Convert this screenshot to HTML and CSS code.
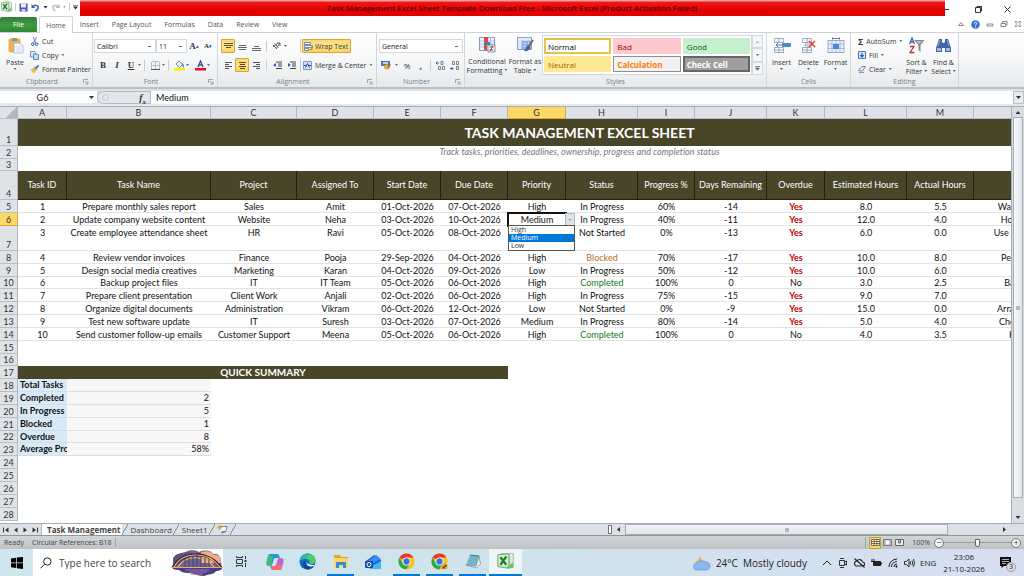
FILE: index.html
```html
<!DOCTYPE html>
<html lang="en">
<head>
<meta charset="utf-8">
<title>Task Management Excel Sheet</title>
<link rel="stylesheet" href="styles.css">
</head>
<body>
<svg class="defs" aria-hidden="true">
  <symbol id="excel" viewBox="0 0 20 20"><rect x="5" y="1" width="14" height="15" fill="#f7fbf5" stroke="#7fae7b"/><path d="M12 5h6M12 8h6M12 11h6M15 2v13" stroke="#a9cfa4"/><path d="M1 2l13-1v17L1 16z" fill="#d4edcf" stroke="#5da353"/><path d="M4 5l7 9M11 4l-7 10" stroke="#1e7b2e" stroke-width="2.6"/><path d="M10 18l9-7v7z" fill="#75c063"/></symbol>
  <symbol id="chrome" viewBox="0 0 20 20"><circle cx="10" cy="10" r="9.5" fill="#fbc116"/><path d="M10 10L1.8 5.2A9.5 9.5 0 0 1 18.2 5.2H10z" fill="#e33b2e"/><path d="M1.8 5.2A9.5 9.5 0 0 0 9.6 19.5L14 12 10 10 5.9 12.3z" fill="#2da94f"/><circle cx="10" cy="10" r="4.8" fill="#fff"/><circle cx="10" cy="10" r="3.7" fill="#3474e0"/></symbol>
  <symbol id="launch" viewBox="0 0 6 6"><path d="M.5 4V.5H5M2 2l3 3M5 2.5V5H2.500" fill="none" stroke="#8b929a" stroke-width=".8"/></symbol>
</svg>

<header class="titlebar">
  <div class="quick">
    <svg width="11" height="12"><use href="#excel"/></svg>
    <i class="vsep"></i>
    <button aria-label="Save"><svg width="9" height="9" viewBox="0 0 9 9"><path d="M.5.5h8v8h-8z" fill="#4a53b5"/><path d="M2 .5h5v4H2z" fill="#eef2fb"/><path d="M2.500 6h4v2.500h-4z" fill="#cfd5ee"/></svg></button>
    <button aria-label="Undo"><svg width="9" height="9" viewBox="0 0 9 9"><path d="M2 3.500C5 1 8 3 7 5.500 6.500 7 5.500 7.500 4.500 8" fill="none" stroke="#3a66c4" stroke-width="1.600"/><path d="M.5 1v4h4z" fill="#3a66c4"/></svg></button>
    <i class="arrow dark"></i>
    <button aria-label="Redo"><svg width="9" height="9" viewBox="0 0 9 9"><path d="M7 3.500C4 1 1 3 2 5.500 2.500 7 3.500 7.500 4.500 8" fill="none" stroke="#b4b8bd" stroke-width="1.200"/><path d="M8.500 1v4h-4z" fill="#b4b8bd"/></svg></button>
    <i class="arrow pale"></i>
    <i class="vsep"></i>
    <i class="arrow dark bar"></i>
  </div>
  <h1 class="caption">Task Management Excel Sheet Template Download Free - Microsoft Excel (Product Activation Failed)</h1>
  <div class="winctl">
    <button aria-label="Minimize"><svg width="9" height="9" viewBox="0 0 9 9"><path d="M0 4.500h4" stroke="#333"/></svg></button>
    <button aria-label="Restore"><svg width="9" height="9" viewBox="0 0 9 9"><path d="M1.500 2.500h5v5h-5zM3 2.500v-1h4.500V6h-1" fill="none" stroke="#333"/></svg></button>
    <button aria-label="Close"><svg width="9" height="9" viewBox="0 0 9 9"><path d="M1.500 1.500l6 6M7.500 1.500l-6 6" stroke="#333"/></svg></button>
  </div>
</header>

<nav class="tabs">
  <button class="file">File</button>
  <button class="tab on">Home</button>
  <button class="tab">Insert</button>
  <button class="tab">Page Layout</button>
  <button class="tab">Formulas</button>
  <button class="tab">Data</button>
  <button class="tab">Review</button>
  <button class="tab">View</button>
  <div class="docctl">
    <button aria-label="Minimize ribbon"><svg width="8" height="8" viewBox="0 0 8 8"><path d="M1.500 5.500h5L4 2.500z" fill="none" stroke="#777" stroke-width=".8"/></svg></button>
    <button aria-label="Help"><svg width="9" height="9" viewBox="0 0 9 9"><circle cx="4.500" cy="4.500" r="4.300" fill="#3474cf"/><path d="M3.200 3.600c0-2 2.800-1.800 2.600 0-.1.900-1.300.9-1.300 2M4.500 6.600v1" fill="none" stroke="#fff"/></svg></button>
    <button aria-label="Minimize window"><svg width="8" height="8" viewBox="0 0 8 8"><path d="M1 4h6v2H1z" fill="none" stroke="#777" stroke-width=".8"/></svg></button>
    <button aria-label="Restore window"><svg width="8" height="8" viewBox="0 0 8 8"><path d="M1 3.500h4.500v3H1zM2.500 3V1.500H7V5H6" fill="none" stroke="#777" stroke-width=".9"/></svg></button>
    <button aria-label="Close window"><svg width="8" height="8" viewBox="0 0 8 8"><path d="M1 1.500h2l1 1.500 1-1.500h2L5.300 4 7 6.500H5L4 5 3 6.500H1L2.700 4z" fill="none" stroke="#777" stroke-width=".7"/></svg></button>
  </div>
</nav>

<section class="ribbon">
  <div class="group g-clip">
    <div class="body">
      <button class="big paste"><svg width="17" height="17" viewBox="0 0 17 17"><rect x="2" y="2" width="11" height="13" rx="1" fill="#efb252" stroke="#d39333" stroke-width=".6"/><path d="M5 1h5v3H5z" fill="#8d8f96"/><path d="M7 6h6l3 3v7H7z" fill="#f3f7fd" stroke="#90a6c8" stroke-width=".7"/><path d="M9 10h5M9 12h5M9 14h5" stroke="#bccbe2" stroke-width=".6"/></svg><span>Paste</span><i class="arrow"></i></button>
      <div class="stack">
        <button class="line"><svg width="9" height="9" viewBox="0 0 9 9"><path d="M3 0l3 6M6.500 0L3.500 6" stroke="#557bbf" stroke-width=".9"/><circle cx="2.800" cy="7.200" r="1.300" fill="none" stroke="#3158a8"/><circle cx="6.600" cy="7.200" r="1.300" fill="none" stroke="#3158a8"/></svg>Cut</button>
        <button class="line"><svg width="9" height="9" viewBox="0 0 9 9"><path d="M.5.5h4l1 1v4.500h-5z" fill="#dfeafa" stroke="#5478b9" stroke-width=".8"/><path d="M3.500 3h4l1 1v4.500h-5z" fill="#c7dbf7" stroke="#4169b0" stroke-width=".8"/></svg>Copy<i class="arrow"></i></button>
        <button class="line"><svg width="9" height="9" viewBox="0 0 9 9"><path d="M0 5l4-2.500 2.500 2.500L4 8.500z" fill="#e9bd4e"/><path d="M4 2.500L5 1.500l2.500 2.500-1 1z" fill="#6a7ba5"/><path d="M6.300 2.800L8.500.5" stroke="#3d4c80" stroke-width="1.500"/></svg>Format Painter</button>
      </div>
    </div>
    <div class="foot"><span>Clipboard</span><svg width="6" height="6"><use href="#launch"/></svg></div>
  </div>

  <div class="group g-font">
    <div class="rows">
      <div class="row">
        <select class="combo name" aria-label="Font"><option>Calibri</option></select>
        <select class="combo size" aria-label="Font size"><option>11</option></select>
        <button class="ic serif grow" aria-label="Grow font">A<sup>▴</sup></button>
        <button class="ic serif shrink" aria-label="Shrink font">A<sup>▾</sup></button>
      </div>
      <div class="row">
        <button class="ic serif b">B</button>
        <button class="ic serif i">I</button>
        <button class="ic serif u">U</button>
        <i class="arrow"></i><i class="vsep"></i>
        <button class="ic" aria-label="Borders"><svg width="9" height="9" viewBox="0 0 9 9"><path d="M1 .5h7M1 4.500h7M.5 1v7M4.500 1v7M8.500 1v7" stroke="#aab0b8" stroke-width=".8"/><path d="M0 8.500h9" stroke="#555"/></svg></button>
        <i class="arrow"></i><i class="vsep"></i>
        <button class="ic" aria-label="Fill colour"><svg width="11" height="11" viewBox="0 0 11 11"><path d="M2 4l3-3 3.500 3.500-3 3z" fill="#e7eefa" stroke="#5f7091" stroke-width=".8"/><path d="M8 3c2 1 2 3 1.500 5L8 5z" fill="#366ac3"/><path d="M0 8h11v2.500H0z" fill="#ffee00"/></svg></button>
        <i class="arrow"></i>
        <button class="ic" aria-label="Font colour"><svg width="11" height="11" viewBox="0 0 11 11"><path d="M3 7l2.500-6L8 7M3.800 5h3.400" fill="none" stroke="#35508f" stroke-width="1.300"/><path d="M0 8h11v2.500H0z" fill="#e8111b"/></svg></button>
        <i class="arrow"></i>
      </div>
    </div>
    <div class="foot"><span>Font</span><svg width="6" height="6"><use href="#launch"/></svg></div>
  </div>

  <div class="group g-align">
    <div class="rows">
      <div class="row">
        <button class="ic on" aria-label="Top align"><svg width="9" height="9" viewBox="0 0 9 9"><path d="M0 1.500h9M0 3.500h9M2 5.500h5" stroke="#5b5430"/></svg></button>
        <button class="ic" aria-label="Middle align"><svg width="9" height="9" viewBox="0 0 9 9"><path d="M1 3.500h7M0 5.500h9M1 7.500h7" stroke="#666"/></svg></button>
        <button class="ic" aria-label="Bottom align"><svg width="9" height="9" viewBox="0 0 9 9"><path d="M2 4.500h5M0 6.500h9M0 8.500h9" stroke="#666"/></svg></button>
        <i class="vsep"></i>
        <button class="ic" aria-label="Orientation"><svg width="10" height="10" viewBox="0 0 10 10"><path d="M1 4l4 4M2.500 2.500l4 4M1 6l5-4M4 8l4-6M8 2v3M8 2H5" stroke="#555" fill="none" stroke-width=".9"/></svg></button>
        <i class="arrow"></i><i class="vsep right"></i>
        <button class="wide on wrap"><svg width="9" height="9" viewBox="0 0 9 9"><path d="M.5.5h6v2h-6zM.5 3.500h8v2h-8zM.5 6.500h4v2h-4z" fill="#f3f6fb" stroke="#5b74a8" stroke-width=".8"/><path d="M8 4v3.500H5.500" fill="none" stroke="#c07a18"/></svg>Wrap Text</button>
      </div>
      <div class="row">
        <button class="ic" aria-label="Align left"><svg width="9" height="9" viewBox="0 0 9 9"><path d="M1 1.500h7M1 3.500h4M1 5.500h7M1 7.500h4" stroke="#555"/></svg></button>
        <button class="ic on" aria-label="Center"><svg width="9" height="9" viewBox="0 0 9 9"><path d="M1 1.500h7M2 3.500h5M1 5.500h7M2 7.500h5" stroke="#5b4a10"/></svg></button>
        <button class="ic" aria-label="Align right"><svg width="9" height="9" viewBox="0 0 9 9"><path d="M1 1.500h7M4 3.500h4M1 5.500h7M4 7.500h4" stroke="#555"/></svg></button>
        <i class="vsep"></i>
        <button class="ic" aria-label="Decrease indent"><svg width="9" height="9" viewBox="0 0 9 9"><path d="M3 1h6M5 3h4M5 5h4M3 7.500h6" stroke="#444"/><path d="M0 4l3-2v4z" fill="#2c65c4"/></svg></button>
        <button class="ic" aria-label="Increase indent"><svg width="9" height="9" viewBox="0 0 9 9"><path d="M3 1h6M5 3h4M5 5h4M3 7.500h6" stroke="#444"/><path d="M4 4L1 2v4z" fill="#2c65c4"/></svg></button>
        <i class="vsep right"></i>
        <button class="wide"><svg width="9" height="9" viewBox="0 0 9 9"><path d="M.5.5h8v8h-8z" fill="#cfe0f7" stroke="#6884b8" stroke-width=".8"/><path d="M2.500 6.500L4.500 2.500l2 4M1 4.500h2M6 4.500h2" fill="none" stroke="#27427c" stroke-width=".9"/></svg>Merge &amp; Center<i class="arrow"></i></button>
      </div>
    </div>
    <div class="foot"><span>Alignment</span><svg width="6" height="6"><use href="#launch"/></svg></div>
  </div>

  <div class="group g-num">
    <div class="rows">
      <div class="row"><select class="combo fmt" aria-label="Number format"><option>General</option></select></div>
      <div class="row">
        <button class="ic" aria-label="Currency"><svg width="10" height="10" viewBox="0 0 10 10"><path d="M0 1h9v5H0z" fill="#5278bb"/><path d="M2 2h5v2H2z" fill="#bcd0ee"/><ellipse cx="6" cy="7" rx="3" ry="2.500" fill="#e4b23e"/><path d="M8 3l2 2-4 4" fill="#9a6c23"/></svg></button>
        <i class="arrow"></i>
        <button class="ic">%</button>
        <button class="ic b">,</button>
        <i class="vsep"></i>
        <button class="ic" aria-label="Increase decimal"><svg width="9" height="9" viewBox="0 0 9 9"><path d="M0 2h3M0 2l1.500-1.500M0 2l1.500 1.500" stroke="#2c65c4" fill="none"/><path d="M5 .5h2v3H5zM2.500 5.500h2v3h-2zM6.500 5.500h2v3h-2z" fill="none" stroke="#666" stroke-width=".8"/></svg></button>
        <button class="ic" aria-label="Decrease decimal"><svg width="9" height="9" viewBox="0 0 9 9"><path d="M0 7.500h3M3 7.500L1.500 6M3 7.500L1.500 9" stroke="#2c65c4" fill="none"/><path d="M2.500.5h2v3h-2zM6.500.5h2v3h-2zM6.500 5.500h2v3h-2z" fill="none" stroke="#666" stroke-width=".8"/></svg></button>
      </div>
    </div>
    <div class="foot"><span>Number</span><svg width="6" height="6"><use href="#launch"/></svg></div>
  </div>

  <div class="group g-styles">
    <div class="body">
      <button class="big cond"><svg width="17" height="17" viewBox="0 0 17 17"><path d="M.5 1.500h15v13H.5z" fill="#eef4fc" stroke="#7f9ccc"/><path d="M.5 5h15M.5 8h15M.5 11h15M11.500 1v13" stroke="#9db4da" stroke-width=".7"/><path d="M5 1h4v5H5z" fill="#e2433b"/><path d="M5 6h6v3H5z" fill="#4778c9"/><path d="M5 9h3v5H5z" fill="#e2433b"/><path d="M9 9h7v7H9z" fill="#fff" stroke="#666" stroke-width=".7"/><path d="M10.500 11h4M10.500 14h4M14 10l-3 5" stroke="#333" stroke-width=".8"/></svg><span>Conditional<br>Formatting<i class="arrow"></i></span></button>
      <button class="big fat"><svg width="17" height="17" viewBox="0 0 17 17"><path d="M.5 1.500h14v12H.5z" fill="#e8f0fb" stroke="#7f9ccc"/><path d="M4 5h10v8H4z" fill="#86acdf"/><path d="M.5 4.500h14M.5 7.500h14M.5 10.500h14M4.500 1v12M8 1v12M11.500 1v12" stroke="#c1d2ec" stroke-width=".7"/><path d="M16 4l-4 6" stroke="#8a6c3a" stroke-width="2"/><path d="M12 9c-4 1-3 4-5 6 4 1 7-2 6-5z" fill="#45659e"/></svg><span>Format as<br>Table<i class="arrow"></i></span></button>
      <div class="gallery">
        <button class="st normal">Normal</button><button class="st bad">Bad</button><button class="st good">Good</button>
        <button class="st neutral">Neutral</button><button class="st calc">Calculation</button><button class="st check">Check Cell</button>
      </div>
      <div class="spin"><button aria-label="Up"><i class="arrow pale up"></i></button><button aria-label="Down"><i class="arrow"></i></button><button aria-label="More"><i class="arrow bar"></i></button></div>
    </div>
    <div class="foot"><span>Styles</span></div>
  </div>

  <div class="group g-cells">
    <div class="body">
      <button class="big"><svg width="18" height="17" viewBox="0 0 18 17"><path d="M1.500 1.500h9v4h-9zM6 1.500v4M1.500 10.500h9v5h-9zM6 10.500v5M1.500 13h9" fill="#f6f8fb" stroke="#8a98ad" stroke-width=".8"/><path d="M9.500 6.500h8v3h-8z" fill="#4c86d8" stroke="#356bb8" stroke-width=".7"/><path d="M3 8h6M3 8l2-2M3 8l2 2" stroke="#5378b6" fill="none"/></svg><span>Insert</span><i class="arrow"></i></button>
      <button class="big"><svg width="18" height="17" viewBox="0 0 18 17"><path d="M2.500 1.500h9v4h-9zM7 1.500v4M2.500 10.500h9v5h-9zM7 10.500v5M2.500 13h9M5 7h6v2H5z" fill="#f6f8fb" stroke="#8a98ad" stroke-width=".8"/><path d="M9 4l6 6M15 4L9 10" stroke="#e63a2c" stroke-width="1.500"/></svg><span>Delete</span><i class="arrow"></i></button>
      <button class="big"><svg width="18" height="17" viewBox="0 0 18 17"><path d="M1 3.500h16v12H1z" fill="#e9f0fa" stroke="#8196ba" stroke-width=".8"/><path d="M5 3v13M9 3v13M13 3v13M1 7h16M1 11.500h16" stroke="#9cafcf" stroke-width=".8"/><path d="M6 7h6v5H6z" fill="#4c86d8"/><path d="M5.500.5v2M12.500.5v2M5.500 1.500h7" stroke="#5877a8"/></svg><span>Format</span><i class="arrow"></i></button>
    </div>
    <div class="foot"><span>Cells</span></div>
  </div>

  <div class="group g-edit">
    <div class="body">
      <div class="stack">
        <button class="line"><b class="sigma">Σ</b>AutoSum<i class="arrow"></i></button>
        <button class="line"><svg width="8" height="8" viewBox="0 0 8 8"><path d="M.5.5h7v7h-7z" fill="#d5e4f8" stroke="#5078b8"/><path d="M4 2v4M2.200 4.200L4 6l1.800-1.800" fill="none" stroke="#2256ae" stroke-width="1.200"/></svg>Fill<i class="arrow"></i></button>
        <button class="line"><svg width="8" height="8" viewBox="0 0 8 8"><path d="M.5 5L4 1.500h3.500L4.500 6H1z" fill="#e6edf8" stroke="#5a6d96" stroke-width=".8"/><path d="M1 7.500h5" stroke="#5a6d96" stroke-width=".7"/></svg>Clear<i class="arrow"></i></button>
      </div>
      <button class="big"><svg width="17" height="17" viewBox="0 0 17 17"><path d="M1.500 7L4 1l2.500 6M2.300 5h3.400" fill="none" stroke="#3865bd" stroke-width="1.300"/><path d="M2 9.500h4L2 15.500h4.500" fill="none" stroke="#b83a32" stroke-width="1.300"/><path d="M6 3h10.500l-4 5v7l-2-2V8z" fill="#84878c"/><path d="M8 4h6l-2.500 3z" fill="#bcc0c6"/></svg><span>Sort &amp;<br>Filter<i class="arrow"></i></span></button>
      <button class="big"><svg width="17" height="17" viewBox="0 0 17 17"><path d="M4 2h3v3l1 1h1l1-1V2h3l3 9v4h-6v-4H7v4H1v-4z" fill="#4265a6"/><path d="M2 11h4v3H2zM11 11h4v3h-4z" fill="#9db8e2"/><path d="M5 3l-2 6M12 3l2 6" stroke="#87a6da"/></svg><span>Find &amp;<br>Select<i class="arrow"></i></span></button>
    </div>
    <div class="foot"><span>Editing</span></div>
  </div>
</section>

<div class="fbar">
  <input class="namebox" aria-label="Name box" value="G6"><i class="arrow dark"></i>
  <div class="fx"><span class="knob"></span><span class="fxl">f<sub>x</sub></span></div>
  <input class="formula" aria-label="Formula" value="Medium">
  <button class="expand" aria-label="Expand formula bar"><i class="arrow dark"></i></button>
</div>

<main class="work">
  <div class="port">
    <table class="sheet">
      <colgroup><col class="w-r"><col class="w-a"><col class="w-b"><col class="w-c"><col class="w-d"><col class="w-e"><col class="w-e"><col class="w-g"><col class="w-h"><col class="w-i"><col class="w-h"><col class="w-g"><col class="w-l"><col class="w-e"><col class="w-n"></colgroup>
      <thead><tr><th class="corner"></th><th>A</th><th>B</th><th>C</th><th>D</th><th>E</th><th>F</th><th class="sel">G</th><th>H</th><th>I</th><th>J</th><th>K</th><th>L</th><th>M</th><th></th></tr></thead>
      <tbody>
        <tr class="r1"><th>1</th><td colspan="14" class="title">TASK MANAGEMENT EXCEL SHEET</td></tr>
        <tr><th>2</th><td colspan="14" class="sub">Track tasks, priorities, deadlines, ownership, progress and completion status</td></tr>
        <tr class="short"><th>3</th><td colspan="14"></td></tr>
        <tr class="head"><th>4</th><td>Task ID</td><td>Task Name</td><td>Project</td><td>Assigned To</td><td>Start Date</td><td>Due Date</td><td>Priority</td><td>Status</td><td>Progress %</td><td>Days Remaining</td><td>Overdue</td><td>Estimated Hours</td><td>Actual Hours</td><td></td></tr>
        <tr class="d"><th>5</th><td>1</td><td>Prepare monthly sales report</td><td>Sales</td><td>Amit</td><td>01-Oct-2026</td><td>07-Oct-2026</td><td>High</td><td>In Progress</td><td>60%</td><td>-14</td><td class="yes">Yes</td><td>8.0</td><td>5.5</td><td>Waiting for the final sales data</td></tr>
        <tr class="d"><th class="sel">6</th><td>2</td><td>Update company website content</td><td>Website</td><td>Neha</td><td>03-Oct-2026</td><td>10-Oct-2026</td>
          <td class="active">Medium
            <button class="pick" aria-label="Choose priority"><i class="arrow"></i></button>
            <ul class="menu" role="listbox" aria-label="Priority"><li role="option">High</li><li role="option" aria-selected="true" class="hot">Medium</li><li role="option">Low</li></ul>
          </td>
          <td>In Progress</td><td>40%</td><td>-11</td><td class="yes">Yes</td><td>12.0</td><td>4.0</td><td>Homepage texts are pending</td></tr>
        <tr class="d tall"><th>7</th><td>3</td><td>Create employee attendance sheet</td><td>HR</td><td>Ravi</td><td>05-Oct-2026</td><td>08-Oct-2026</td><td></td><td>Not Started</td><td>0%</td><td>-13</td><td class="yes">Yes</td><td>6.0</td><td>0.0</td><td>Use standard HR sheet template</td></tr>
        <tr class="d"><th>8</th><td>4</td><td>Review vendor invoices</td><td>Finance</td><td>Pooja</td><td>29-Sep-2026</td><td>04-Oct-2026</td><td>High</td><td class="blocked">Blocked</td><td>70%</td><td>-17</td><td class="yes">Yes</td><td>10.0</td><td>8.0</td><td>Pending the vendor approval</td></tr>
        <tr class="d"><th>9</th><td>5</td><td>Design social media creatives</td><td>Marketing</td><td>Karan</td><td>04-Oct-2026</td><td>09-Oct-2026</td><td>Low</td><td>In Progress</td><td>50%</td><td>-12</td><td class="yes">Yes</td><td>10.0</td><td>6.0</td><td>Final banners in review</td></tr>
        <tr class="d short"><th>10</th><td>6</td><td>Backup project files</td><td>IT</td><td>IT Team</td><td>05-Oct-2026</td><td>06-Oct-2026</td><td>High</td><td class="done">Completed</td><td>100%</td><td>0</td><td>No</td><td>3.0</td><td>2.5</td><td>Backup stored on the drive</td></tr>
        <tr class="d"><th>11</th><td>7</td><td>Prepare client presentation</td><td>Client Work</td><td>Anjali</td><td>02-Oct-2026</td><td>06-Oct-2026</td><td>High</td><td>In Progress</td><td>75%</td><td>-15</td><td class="yes">Yes</td><td>9.0</td><td>7.0</td><td></td></tr>
        <tr class="d"><th>12</th><td>8</td><td>Organize digital documents</td><td>Administration</td><td>Vikram</td><td>06-Oct-2026</td><td>12-Oct-2026</td><td>Low</td><td>Not Started</td><td>0%</td><td>-9</td><td class="yes">Yes</td><td>15.0</td><td>0.0</td><td>Arrange all files by department</td></tr>
        <tr class="d"><th>13</th><td>9</td><td>Test new software update</td><td>IT</td><td>Suresh</td><td>03-Oct-2026</td><td>07-Oct-2026</td><td>Medium</td><td>In Progress</td><td>80%</td><td>-14</td><td class="yes">Yes</td><td>5.0</td><td>4.0</td><td>Check all of the main features</td></tr>
        <tr class="d"><th>14</th><td>10</td><td>Send customer follow-up emails</td><td>Customer Support</td><td>Meena</td><td>05-Oct-2026</td><td>06-Oct-2026</td><td>High</td><td class="done">Completed</td><td>100%</td><td>0</td><td>No</td><td>4.0</td><td>3.5</td><td>High priority replies sent</td></tr>
        <tr><th>15</th><td colspan="14"></td></tr>
        <tr class="short"><th>16</th><td colspan="14"></td></tr>
        <tr><th>17</th><td colspan="6" class="qs">QUICK SUMMARY</td><td colspan="8"></td></tr>
        <tr class="s"><th>18</th><td>Total Tasks</td><td></td><td colspan="12"></td></tr>
        <tr class="s"><th>19</th><td>Completed</td><td>2</td><td colspan="12"></td></tr>
        <tr class="s"><th>20</th><td>In Progress</td><td>5</td><td colspan="12"></td></tr>
        <tr class="s"><th>21</th><td>Blocked</td><td>1</td><td colspan="12"></td></tr>
        <tr class="s short"><th>22</th><td>Overdue</td><td>8</td><td colspan="12"></td></tr>
        <tr class="s"><th>23</th><td>Average Progress</td><td>58%</td><td colspan="12"></td></tr>
        <tr><th>24</th><td colspan="14"></td></tr>
        <tr><th>25</th><td colspan="14"></td></tr>
        <tr><th>26</th><td colspan="14"></td></tr>
        <tr><th>27</th><td colspan="14"></td></tr>
        <tr><th>28</th><td colspan="14"></td></tr>
      </tbody>
    </table>
  </div>
  <div class="vscroll"><i class="arrow dark up"></i><div class="vthumb"><i></i></div><i class="arrow dark"></i></div>
</main>

<div class="sheetbar">
  <div class="navs">
    <button aria-label="First sheet"><svg width="6" height="6" viewBox="0 0 6 6"><path d="M.5.5v5" stroke="#333"/><path d="M5.500.5v5L2 3z" fill="#333"/></svg></button>
    <button aria-label="Previous sheet"><svg width="6" height="6" viewBox="0 0 6 6"><path d="M4.500.5v5L1 3z" fill="#333"/></svg></button>
    <button aria-label="Next sheet"><svg width="6" height="6" viewBox="0 0 6 6"><path d="M1.500.5v5L5 3z" fill="#333"/></svg></button>
    <button aria-label="Last sheet"><svg width="6" height="6" viewBox="0 0 6 6"><path d="M5.500.5v5" stroke="#333"/><path d="M.5.5v5L4 3z" fill="#333"/></svg></button>
  </div>
  <button class="stab on">Task Management</button><i class="slant"></i>
  <button class="stab">Dashboard</button><i class="slant"></i>
  <button class="stab">Sheet1</button><i class="slant"></i>
  <button class="new" aria-label="Insert sheet"><svg width="11" height="9" viewBox="0 0 11 9"><path d="M3 1.500h7l-1 5H5" fill="#f4f7fc" stroke="#58709f" stroke-width=".8"/><path d="M4 8l5-1.500" stroke="#58709f"/><path d="M2.500 0v5M0 2.500h5" stroke="#e9a126" stroke-width="1.300"/></svg></button><i class="slant"></i>
  <div class="hscroll"><span class="split"></span><i class="arrow dark left"></i><div class="hthumb"><i></i></div><i class="arrow dark rightw"></i></div>
</div>

<footer class="status">
  <span class="ready">Ready</span><span class="circ">Circular References: B18</span>
  <div class="views">
    <button class="on" aria-label="Normal view"><svg width="9" height="7" viewBox="0 0 9 7"><path d="M.5.5h8v6h-8zM.5 2.500h8M.5 4.500h8M3.200.5v6M5.800.5v6" fill="#fff" stroke="#5a5230" stroke-width=".8"/></svg></button>
    <button aria-label="Page layout view"><svg width="9" height="7" viewBox="0 0 9 7"><path d="M.5.5h8v6h-8z" fill="#b9bcc0" stroke="#777"/><path d="M3 1.500h3v4H3z" fill="#fff"/></svg></button>
    <button aria-label="Page break view"><svg width="9" height="7" viewBox="0 0 9 7"><path d="M.5.5h8v6h-8zM3.500 0v4h2V0" fill="#e8eaec" stroke="#666"/></svg></button>
  </div>
  <span class="pct">100%</span>
  <button class="round" aria-label="Zoom out">−</button>
  <input type="range" class="zoom" aria-label="Zoom" min="0" max="100" value="50">
  <button class="round" aria-label="Zoom in">+</button>
</footer>

<div class="taskbar">
  <button class="start" aria-label="Start"><svg width="12" height="12" viewBox="0 0 12 12"><path d="M0 1.500l5.300-.8v4.800H0zM6 .6L12 0v5.500H6zM0 6.200h5.300V11L0 10.300zM6 6.200h6V12l-6-.8z" fill="#000"/></svg></button>
  <label class="search">
    <svg width="12" height="12" viewBox="0 0 12 12"><circle cx="7.300" cy="4.500" r="3.700" fill="none" stroke="#222"/><path d="M4.600 7.200L.5 11.300" stroke="#222"/></svg>
    <input type="text" aria-label="Search" placeholder="Type here to search">
    <svg class="bridge" width="52" height="26" viewBox="0 0 52 26"><path d="M3 9c0-5 5-6 9-4 2-5 11-6 16-3 6-3 13-1 14 2 5-1 8 3 8 7l1 7H1z" fill="#77608f"/><path d="M30 2c6-2 12 0 13 3 5-1 7 3 7 8H30z" fill="#f0ae82"/><path d="M2 8c4-5 12-7 20-5l-9 10H2z" fill="#5b527f"/><path d="M1 17h50c1 2-2 4-6 4-2 4-8 3-12 5-8 0-10-3-16-3-4 0-7-1-9-3-4 0-7-1-7-3z" fill="#493f86"/><path d="M14 20h24M18 22h18M20 24h12" stroke="#a66fa3"/><path d="M2 18C10 1 38 0 50 18" fill="none" stroke="#32204b" stroke-width="3"/><path d="M3 17C12 1 37 1 49 17M7 17C15 4 34 5 43 17" fill="none" stroke="#f1b55c" stroke-width="1.200"/><path d="M14 9v8M18 7v10M22 6v11M26 5v12M30 6v11M34 7v10M38 9v8" stroke="#33497c"/><path d="M0 17.500h52" stroke="#ecae62"/></svg>
  </label>
  <div class="apps">
    <button class="app" aria-label="Task view"><svg width="13" height="13" viewBox="0 0 13 13"><path d="M1.500 1v1.500h6V1M1.500 12v-1.500h6V12M1.500 4.500h6v4h-6zM10.500 1v3M10.500 8v4" fill="none" stroke="#333"/><path d="M9.500 5h2v2h-2z" fill="#333"/></svg></button>
    <button class="app" aria-label="Copilot"><svg width="18" height="18" viewBox="0 0 18 18"><path d="M4 1h7c2 0 2 2 3 4H9C7 6 7 12 5 13H3c-3 0-3-3-2-6s1-6 3-6z" fill="#2397dc"/><path d="M1 8c1-4 1-5 2-6l4 2-2 9H3c-2 0-3-2-2-5z" fill="#42ba79"/><path d="M14 17H7c-2 0-2-2-3-4h5c2-1 2-7 4-8h2c3 0 3 3 2 6s-1 6-3 6z" fill="#bb65d8"/><path d="M14 17H8c-2 0-2-2-3-4h5l1-3 5 3c-1 3-1 4-2 4z" fill="#f56c6c"/></svg></button>
    <button class="app" aria-label="Edge"><svg width="17" height="17" viewBox="0 0 17 17"><circle cx="8.500" cy="8.500" r="8" fill="#1468bd"/><path d="M.6 8C1 3 5 .5 8.500.5c5 0 8 4 8 7 0 3-3 4-6 3.500 1-3-1-5-4-5C3 6 1 7 .6 8z" fill="#29b7b0"/><path d="M9 .5c5 0 8 4 7.500 7.500-1 3-4 3-6 3 1-3 0-5-3-5z" fill="#4bcc69"/><path d="M7 8c-2 4 2 7 8 5-2 3-6 4-8 3-4-2-4-7 0-8z" fill="#0b4793"/><path d="M9 7c-2 1-2 5 5 5 1 0 1.500 0 1 1-7 2-9-3-6-6z" fill="#fff"/></svg></button>
    <button class="app run" aria-label="File Explorer"><svg width="16" height="15" viewBox="0 0 16 15"><path d="M1 1h6l1 2h7v10H1z" fill="#e8a31f"/><path d="M1 4h14v9H1z" fill="#fdd66a"/><path d="M3 14V8h10v6h-3v-3H6v3z" fill="#3989d6"/></svg></button>
    <button class="app" aria-label="Outlook"><svg width="17" height="16" viewBox="0 0 17 16"><path d="M1 7l8-6 7 5v8H3z" fill="#1a5fd0"/><path d="M4 6l7-5 5 4-9 5z" fill="#2f8cf0"/><path d="M5 13l11-6v8H4z" fill="#41b7f3"/><rect x="0" y="7" width="8" height="7" rx="1" fill="#1849a9"/><circle cx="4" cy="10.500" r="2" fill="none" stroke="#fff"/></svg></button>
    <button class="app run" aria-label="Chrome"><svg width="17" height="17"><use href="#chrome"/></svg></button>
    <button class="app run" aria-label="Chrome profile"><svg width="17" height="17" viewBox="0 0 17 17"><use href="#chrome" width="17" height="17"/><circle cx="13.500" cy="13.500" r="3" fill="#dca63a"/><path d="M11.500 15.500l4-3.500" stroke="#6a3519" stroke-width="1.500"/></svg></button>
    <button class="app run" aria-label="Notepad"><svg width="16" height="15" viewBox="0 0 16 15"><path d="M5 1l9 1-3 10-10-1z" fill="#76b5c8"/><path d="M14 2l1.500 8-4 4L1 11l10 1z" fill="#eef2ee" stroke="#6d8792" stroke-width=".7"/><path d="M5 1l9 1" stroke="#50727d"/></svg></button>
    <button class="app run cur" aria-label="Excel"><svg width="17" height="17"><use href="#excel"/></svg></button>
  </div>
  <button class="weather"><svg width="18" height="16" viewBox="0 0 18 16"><path d="M7 0c0 4 2 6 6 6-1 4-8 5-11 1 3 0 5-3 5-7z" fill="#f4a723"/><path d="M4 15a3.500 3.500 0 0 1 0-7 5 4 0 0 1 8-1 4 4 0 0 1 2 8z" fill="#8bb7f2" stroke="#5d90dc" stroke-width=".6"/></svg><span>24°C</span><span>Mostly cloudy</span></button>
  <div class="tray">
    <svg width="10" height="10" viewBox="0 0 10 10"><path d="M1 7l4-4 4 4" fill="none" stroke="#222"/></svg>
    <svg width="10" height="10" viewBox="0 0 10 10"><path d="M1.500 2.500h5v5h-5zM6.500 4l2-1v4l-2-1M2 .5h4M2 9.500h4" fill="none" stroke="#222" stroke-width=".9"/></svg>
    <svg width="11" height="10" viewBox="0 0 11 10"><path d="M3 8a2.500 2.500 0 0 1 0-5 3 3 0 0 1 5.500 1A2 2 0 0 1 8.500 8zM.5.5l10 9" fill="none" stroke="#222" stroke-width="1.100"/></svg>
    <svg width="11" height="10" viewBox="0 0 11 10"><path d="M2.500 3.500h7v4h-7z" fill="#222" stroke="#222"/><path d="M10.500 4.500v2M1 1v3M3 1v3M0 3.500h4" stroke="#222"/></svg>
    <svg width="10" height="10" viewBox="0 0 10 10"><path d="M1 9a8 8 0 0 1 8-8M3.500 9A5.500 5.500 0 0 1 9 3.500M6 9a3 3 0 0 1 3-3" fill="none" stroke="#222"/><circle cx="8.500" cy="8.500" r="1"/></svg>
    <svg width="11" height="10" viewBox="0 0 11 10"><path d="M.5 3.500h2L5 1v8L2.500 6.500h-2zM6.500 3.500v3M8 2.500q1.500 2.500 0 5M9.500 1q2 4 0 8" fill="none" stroke="#222" stroke-width=".9"/></svg>
  </div>
  <span class="lang">ENG</span>
  <time class="clock">23:06<br>21-10-2026</time>
  <button class="notes" aria-label="3 notifications"><svg width="12" height="12" viewBox="0 0 12 12"><path d="M0 0h11v9H4L1.500 11V9H0z" fill="#111"/><path d="M2 2.500h7M2 4.500h7M2 6.500h4" stroke="#ddd" stroke-width=".8"/></svg><b>3</b></button>
</div>
</body>
</html>
```
FILE: styles.css
```css
* { box-sizing: border-box; }
html, body { height: 100%; }
body {
  margin: 0;
  display: flex;
  flex-direction: column;
  overflow: hidden;
  background: #fff;
  color: #333;
  font: 7px/9px "Open Sans", "Noto Sans", sans-serif;
}
button, input, select { font: inherit; color: inherit; margin: 0; padding: 0; border: 0; background: none; }
button { display: flex; align-items: center; justify-content: center; white-space: nowrap; }
svg { display: block; flex: none; }
.defs { position: absolute; width: 0; height: 0; }

/* small shared marks */
.arrow { flex: none; display: inline-block; width: 3px; height: 2px; background: #666; clip-path: polygon(0 0, 100% 0, 50% 100%); }
.arrow.dark { width: 5px; height: 3px; background: #333; }
.arrow.pale { background: #aaa; }
.arrow.up { clip-path: polygon(0 100%, 100% 100%, 50% 0); }
.arrow.bar { width: 5px; height: 5px; clip-path: polygon(0 0, 100% 0, 100% 20%, 0 20%, 0 40%, 100% 40%, 50% 100%, 0 40%); }
.arrow.left, .arrow.rightw { width: 3px; height: 5px; clip-path: polygon(100% 0, 100% 100%, 0 50%); }
.arrow.rightw { clip-path: polygon(0 0, 0 100%, 100% 50%); }
.vsep { flex: none; width: 1px; height: 11px; background: #c9cdd2; }

/* title bar */
.titlebar { flex: none; display: flex; height: 16px; background: #fff; }
.quick { width: 80px; display: flex; align-items: center; justify-content: space-between; padding: 0 2px 2px 1px; }
.quick .vsep { height: 8px; }
.caption {
  flex: 1; margin: 0; text-align: center; white-space: nowrap; overflow: hidden;
  font: 400 8px/16px "Open Sans", sans-serif; color: #3c0000;
  background: linear-gradient(#f7a0a0 0 1px, #f31818 2px, #dd0000 70%, #e40000);
  padding-right: 1px;
}
.winctl { width: 79px; display: flex; align-items: center; justify-content: space-between; padding: 3px 12px 0 0; }

/* ribbon tabs */
.tabs { flex: none; display: flex; gap: 1px; height: 17px; border-bottom: 1px solid #cfd3d8; background: #fff; color: #555; }
.file { width: 37px; margin: 1px 1px 0 0; color: #fff; background: linear-gradient(#2f7d3a, #3e9a3f 50%, #2d8a33); border-radius: 2px 2px 0 0; }
.tab { padding: 0 6px; }
.tab.on { height: 17px; background: #fff; border: 1px solid #cfd3d8; border-bottom: 0; border-radius: 2px 2px 0 0; }
.docctl { margin-left: auto; display: flex; align-items: center; gap: 6px; padding-right: 2px; }

/* ribbon */
.ribbon { flex: none; display: flex; height: 56px; background: linear-gradient(#fff, #f6f7f8 50%, #e6e9ec); border-bottom: 2px solid #b9bfc6; }
.group { display: flex; flex-direction: column; justify-content: space-between; padding: 3px 1px 0; border-right: 1px solid #d3d7db; }
.g-clip { width: 93px; } .g-font { width: 125px; } .g-align { width: 159px; } .g-num { width: 88px; }
.g-styles { width: 302px; } .g-cells { width: 84px; } .g-edit { width: 108px; }
.body { display: flex; }
.foot { display: flex; align-items: center; height: 9px; margin-bottom: 1px; color: #777f88; }
.foot span { flex: 1; text-align: center; }
.foot svg { margin-right: 2px; }
.group { position: relative; }
.big { flex-direction: column; justify-content: flex-start; width: 27px; line-height: 9px; padding-top: 1px; }
.big span { margin-top: 4px; }
.big > .arrow { margin-top: 1px; }
.big span .arrow { margin-left: 2px; vertical-align: 2px; }
.big.paste { width: 28px; }
.big.cond { width: 42px; }
.big.fat { width: 34px; }
.stack { display: flex; flex-direction: column; gap: 4px; }
.line { height: 10px; gap: 3px; justify-content: flex-start; }
.g-clip .stack { margin-left: 1px; }
.g-edit .stack { width: 51px; padding-left: 6px; }
.sigma { font-size: 9px; }
.rows { display: flex; flex-direction: column; gap: 5px; padding-top: 3px; }
.row { display: flex; align-items: center; height: 14px; }
.ic { width: 14px; height: 14px; font-size: 8px; }
.ic.on, .wide.on { background: linear-gradient(#fbd974, #fde58d 50%, #fbd25a); border: 1px solid #d5a63e; border-radius: 1px; }
.serif { font-family: "Liberation Serif", serif; font-weight: 700; font-size: 9px; }
.serif sup { font-size: 5px; color: #2c65c4; }
.shrink { font-size: 7px; }
.i { font-style: italic; } .u { text-decoration: underline; } .b { font-weight: 700; }
.combo { height: 14px; padding: 0 3px 0 2px; border: 1px solid #d4d8dd; appearance: none; color: #222;
  background: #fff linear-gradient(#666, #666) right 4px center / 3px 1px no-repeat; }
.name { width: 62px; } .size { width: 31px; } .fmt { width: 84px; }
.g-font .row + .row { padding-left: 2px; }
.g-font .vsep { margin: 0 3px; }
.g-font .arrow + .ic { margin-left: 4px; }
.g-align .row { padding-left: 2px; }
.g-align .vsep { margin: 0 3px; }
.g-align .vsep.right { margin-left: auto; margin-right: 1px; height: 14px; }
.wide { height: 14px; padding: 0 1px; gap: 3px; width: 73px; justify-content: flex-start; }
.wrap { width: 49px; margin-right: 24px; gap: 2px; }
.g-num .rows { padding-left: 1px; }
.g-num .arrow { margin: 0 2px; }
.g-num .vsep { margin: 0 2px; }
.gallery { display: grid; grid-template-columns: 1fr 1fr 1fr; grid-auto-rows: 16px; gap: 2px; flex: 1; padding: 2px 1px; background: #fff; border: 1px solid #d4d8dd; height: 40px; }
.st { justify-content: flex-start; padding: 0 3px; font-size: 8px; margin: 0; border: 1px solid transparent; }
.normal { border: 2px solid #eac04c; color: #000; padding-left: 2px; }
.bad { background: #ffc7ce; color: #9c0006; }
.good { background: #c6efce; color: #006100; }
.neutral { background: #ffe892; color: #9c6500; }
.calc { background: #f2f2f2; color: #fa7d00; border-color: #8f8f8f; font-weight: 700; }
.check { background: #a0a0a0; color: #fff; border: 2px solid #666; font-weight: 700; padding-left: 2px; }
.g-styles { padding-top: 2px; }
.spin { width: 11px; display: flex; flex-direction: column; height: 40px; margin-right: 2px; }
.spin button { flex: 1; border: 1px solid #d4d8dd; background: #f5f6f8; }
.g-cells .body { justify-content: space-around; }

/* formula bar */
.fbar { flex: none; display: flex; align-items: center; height: 18px; padding: 2px 0; border-bottom: 1px solid #a6adb5; font-family: Lato, sans-serif; font-size: 9px;
  background: linear-gradient(90deg, #fff 97px, #d5dae0 97px); box-shadow: inset 0 2px #dfe3e8, inset 0 -3px #e4e7eb; }
.fbar > * { align-self: stretch; }
.fbar > .arrow { align-self: center; margin: 0 3px 0 0; }
.namebox { width: 89px; padding-right: 4px; text-align: center; background: transparent; color: #222; }
.fx { width: 54px; display: flex; align-items: center; justify-content: space-between; padding: 0 4px; background: #e3e6ea; border: 1px solid #b3bac2; border-radius: 7px 0 0 7px; }
.knob { width: 7px; height: 7px; border: 1px solid #c3c8ce; border-radius: 50%; }
.fxl { font: italic 700 10px/11px "Liberation Serif", serif; }
.fxl sub { font-size: 7px; line-height: 1px; }
.formula { flex: 1; padding-left: 5px; background: #fff; color: #111; }
.expand { width: 11px; background: #e7eaee; border: 1px solid #bcc2c9; }

/* worksheet */
.work { flex: 1; display: flex; min-height: 0; }
.port { flex: 1; min-width: 0; overflow: hidden; background: #fff; }
.sheet { width: 1141px; table-layout: fixed; border-collapse: separate; border-spacing: 0; font: 9px/12px Lato, "Liberation Sans", sans-serif; font-variant-ligatures: none; color: #111; }
.w-r { width: 18px; } .w-a { width: 49px; } .w-b { width: 144px; } .w-c { width: 86px; } .w-d { width: 77px; }
.w-e { width: 67px; } .w-g { width: 58px; } .w-h { width: 72px; } .w-i { width: 57px; } .w-l { width: 82px; } .w-n { width: 167px; }
.sheet th, .sheet td { padding: 0; text-align: center; white-space: nowrap; font-weight: 400; }
.sheet th { background: #dfe3e8; color: #333; border-right: 1px solid #b1b7be; border-bottom: 1px solid #b9bfc6; line-height: 11px; vertical-align: bottom; }
.sheet .corner { background: linear-gradient(135deg, #dfe3e8 60%, #b3b8bf 60%); }
.sheet th.sel { background: #fcd867; border-color: #d9a93a; }
.sheet tr { height: 13px; }
.sheet thead tr { height: 12px; }
.sheet tr.short { height: 12px; }
.sheet tr.short th, .sheet tr.short td { line-height: 11px; }
.sheet tr.r1 { height: 27px; }
.sheet tr.head { height: 29px; }
.sheet tr.tall { height: 25px; }
.sheet .title, .sheet .qs, .sheet .head td { background: #494529; color: #fff; }
.sheet .title { font-size: 14px; font-weight: 700; line-height: 26px; }
.sheet .sub { font-style: italic; color: #777; line-height: 11px; vertical-align: top; }
.sheet .head td { border-right: 1px solid #24210f; border-bottom: 1px solid #24210f; }
.sheet .d td { vertical-align: top; padding-top: 1px; line-height: 11px; border-bottom: 1px solid #e3e3e3; }
.sheet .d.short td { line-height: 10px; }
.sheet .yes { color: #c00000; font-weight: 700; }
.sheet .blocked { color: #b8701e; }
.sheet .done { color: #17781c; }
.sheet .qs { font-weight: 700; font-size: 10px; line-height: 13px; }
.sheet .s td:nth-child(2) { background: #d9eaf7; font-weight: 700; text-align: left; padding-left: 2px; overflow: hidden; border-bottom: 1px solid #cfe0ec; }
.sheet .s td:nth-child(3) { background: #f7f7f7; text-align: right; padding-right: 2px; border-bottom: 1px solid #dedede; }
.sheet td.active { position: relative; outline: 2px solid #111; outline-offset: -1px; }
.pick { position: absolute; left: 100%; top: 0; width: 10px; height: 13px; margin-left: -1px; background: #dfe3e8; border: 1px solid #b1b7be; }
.menu { position: absolute; left: 0; top: 100%; z-index: 2; width: 67px; margin: 0; padding: 0; list-style: none; background: #fff; border: 1px solid #555; text-align: left; font: 7px/9px "Open Sans", sans-serif; color: #333; }
.menu li { padding-left: 2px; height: 8px; line-height: 8px; }
.menu li.hot { background: #0078d7; color: #fff; }

.vscroll { flex: none; width: 13px; display: flex; flex-direction: column; align-items: center; gap: 3px; padding: 4px 0; background: #d9dde2; border-left: 1px solid #a6adb5; }
.vthumb { width: 10px; flex: 1; display: flex; align-items: center; justify-content: center; background: linear-gradient(90deg, #f8f9fb, #e1e5ea); border: 1px solid #a6adb5; margin-bottom: 15px; }
.vthumb i, .hthumb i { width: 4px; height: 4px; background: #b4bac1; }

/* sheet tabs */
.sheetbar { flex: none; display: flex; align-items: stretch; height: 13px; background: #dce1e8; border-top: 1px solid #a6adb5; border-bottom: 1px solid #8e959d; font: 8px/11px "Open Sans", sans-serif; color: #444; }
.navs { display: flex; width: 42px; justify-content: space-between; padding: 0 3px; border-right: 1px solid #b1b7be; }
.stab { padding: 0 1px 0 3px; }
.stab.on { background: #fff; font-weight: 700; padding-left: 5px; }
.slant { width: 6px; background: linear-gradient(to bottom right, transparent 45%, #8e959d 46% 54%, transparent 55%); }
.new { padding: 0 2px; }
.hscroll { margin-left: auto; width: 416px; display: flex; align-items: center; gap: 5px; padding-right: 18px; }
.split { width: 4px; height: 9px; background: #fff; border: 1px solid #777; }
.hthumb { width: 323px; flex: none; height: 11px; display: flex; align-items: center; justify-content: center; background: linear-gradient(#f3f5f8, #e0e4e9); border: 1px solid #a6adb5; }
.hscroll .rightw { margin-left: auto; }

/* status bar */
.status { flex: none; display: flex; align-items: center; height: 13px; padding: 0 3px 0 4px; background: linear-gradient(#d3d6d9, #bec2c6); color: #444; }
.ready { width: 28px; }
.circ { padding-right: 4px; border-right: 1px solid #a0a5ab; }
.views { margin-left: auto; display: flex; padding-left: 3px; border-left: 1px solid #a0a5ab; }
.views button { width: 12px; height: 12px; }
.views .on { background: #fcd867; border: 1px solid #c79a33; }
.pct { margin: 0 4px 0 7px; }
.round { width: 10px; height: 10px; border: 1px solid #777; border-radius: 50%; background: #f2f3f4; font-size: 9px; line-height: 8px; }
.zoom { appearance: none; width: 67px; height: 9px; background: linear-gradient(#999, #999) center / 100% 1px no-repeat; }
.zoom::-webkit-slider-thumb { appearance: none; width: 5px; height: 8px; background: #f4f5f6; border: 1px solid #666; border-radius: 0 0 2px 2px; }

/* taskbar */
.taskbar { flex: none; display: flex; align-items: stretch; height: 27px; background: linear-gradient(90deg, #cfe6ee, #d0e3ec 50%, #d6dff0); color: #222; font-size: 9px; line-height: 12px; }
.start { width: 33px; }
.search { width: 190px; display: flex; align-items: center; gap: 7px; padding-left: 7px; background: #fff; }
.search input { flex: 1; min-width: 0; font-size: 10px; }
.search input::placeholder { color: #444; opacity: 1; }
.apps { display: flex; padding-left: 2px; }
.app { width: 33px; border-bottom: 2px solid transparent; background-clip: padding-box; }
.app.run { background: linear-gradient(#0078d7, #0078d7) center bottom / 27px 2px no-repeat border-box; }
.app.cur { background: linear-gradient(#0078d7, #0078d7) center bottom / 33px 2px no-repeat border-box, #edf5f9; }
.weather { margin-left: auto; gap: 5px; font-size: 10px; }
.tray { display: flex; align-items: center; gap: 6px; margin: 0 5px 0 15px; }
.lang { align-self: center; width: 19px; font-size: 8px; }
.clock { width: 44px; margin: 0 12px 0 3px; align-self: center; text-align: center; font-size: 8px; }
.notes { position: relative; width: 26px; justify-content: flex-start; padding-left: 2px; }
.notes b { position: absolute; left: 8px; bottom: 4px; width: 10px; height: 10px; border-radius: 50%; background: #d9dde2; border: 1px solid #999; font: 7px/8px "Open Sans", sans-serif; }
```
